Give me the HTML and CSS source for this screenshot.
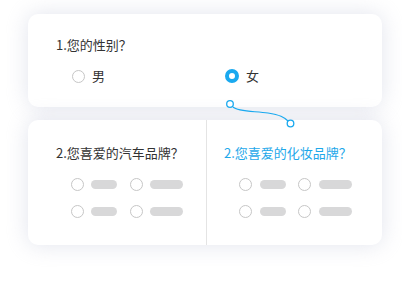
FILE: index.html
```html
<!DOCTYPE html>
<html lang="zh">

<head>
    <meta charset="UTF-8">
    <meta name="viewport" content="width=device-width, initial-scale=1.0">
    <title>问卷</title>
    <link rel="stylesheet" href="styles.css">
</head>

<body>
    <div class="board">
        <div class="card q1">
            <p class="title">1.您的性别？</p>
            <div class="options">
                <label class="opt"><span class="radio"></span>男</label>
                <label class="opt"><span class="radio on"></span>女</label>
            </div>
        </div>

        <div class="card q2">
            <div class="half left">
                <p class="title">2.您喜爱的汽车品牌？</p>
                <div class="grid">
                    <span class="item"><span class="radio"></span><span class="bar"></span></span>
                    <span class="item"><span class="radio"></span><span class="bar long"></span></span>
                    <span class="item"><span class="radio"></span><span class="bar"></span></span>
                    <span class="item"><span class="radio"></span><span class="bar long"></span></span>
                </div>
            </div>
            <div class="half right">
                <p class="title blue">2.您喜爱的化妆品牌？</p>
                <div class="grid">
                    <span class="item"><span class="radio"></span><span class="bar"></span></span>
                    <span class="item"><span class="radio"></span><span class="bar long"></span></span>
                    <span class="item"><span class="radio"></span><span class="bar"></span></span>
                    <span class="item"><span class="radio"></span><span class="bar long"></span></span>
                </div>
            </div>
        </div>

        <!-- link line between the two questions -->
        <svg class="link" width="402" height="286" viewBox="0 0 402 286">
            <circle cx="230" cy="104" r="3.3" fill="#fff" stroke="#1aa9ef" stroke-width="1.3"/>
            <path d="M233 107 C238 112 256 111 268 113 S284 117 288 121" fill="none" stroke="#1aa9ef" stroke-width="1.1"/>
            <circle cx="290.5" cy="123.5" r="3.3" fill="#fff" stroke="#1aa9ef" stroke-width="1.3"/>
        </svg>
    </div>
</body>

</html>
```

FILE: styles.css
```css
body {
    margin: 0;
    background-color: #ffffff;
    font-family: "Noto Sans CJK SC", "Noto Sans", sans-serif;
    color: #333333;
}

.board {
    position: relative;
    width: 354px;
    height: 286px;
    padding: 14px 20px 0 28px;
    box-sizing: content-box;
    display: flex;
    flex-direction: column;
    gap: 13px;
}

.card {
    background-color: #ffffff;
    border-radius: 10px;
    box-shadow: 0 0 22px rgba(190, 195, 215, 0.45);
}

.title {
    margin: 0;
    font-size: 13px;
    line-height: 18px;
    color: #333333;
}

.blue {
    color: #1ea8ea;
}

/* question 1 */
.q1 {
    height: 93px;
    box-sizing: border-box;
    padding: 22px 28px;
}

.options {
    display: grid;
    grid-template-columns: 153px auto;
    margin: 13px 0 0 16px;
}

.opt {
    display: flex;
    align-items: center;
    gap: 7px;
    font-size: 13px;
    line-height: 18px;
}

.radio {
    width: 13px;
    height: 13px;
    box-sizing: border-box;
    border: 1px solid #c6c6c6;
    border-radius: 50%;
    background-color: #ffffff;
    flex-shrink: 0;
}

.radio.on {
    width: 14px;
    height: 14px;
    border: 4.5px solid #1aa9ef;
}

/* question 2 */
.q2 {
    height: 125px;
    display: flex;
}

.half {
    padding-top: 24px;
    box-sizing: border-box;
}

.left {
    width: 179px;
    padding-left: 28px;
    border-right: 1px solid #e4e4e4;
}

.right {
    padding-left: 17px;
}

.grid {
    display: grid;
    grid-template-columns: 59px auto;
    row-gap: 14px;
    margin: 16px 0 0 15px;
}

.left .grid {
    margin-left: 14.5px;
}

.item {
    display: flex;
    align-items: center;
    gap: 7.5px;
    height: 13px;
}

.bar {
    width: 26px;
    height: 9px;
    border-radius: 5px;
    background-color: #d8d8d9;
}

.bar.long {
    width: 33px;
}

.link {
    position: absolute;
    left: 0;
    top: 0;
    pointer-events: none;
}
```
